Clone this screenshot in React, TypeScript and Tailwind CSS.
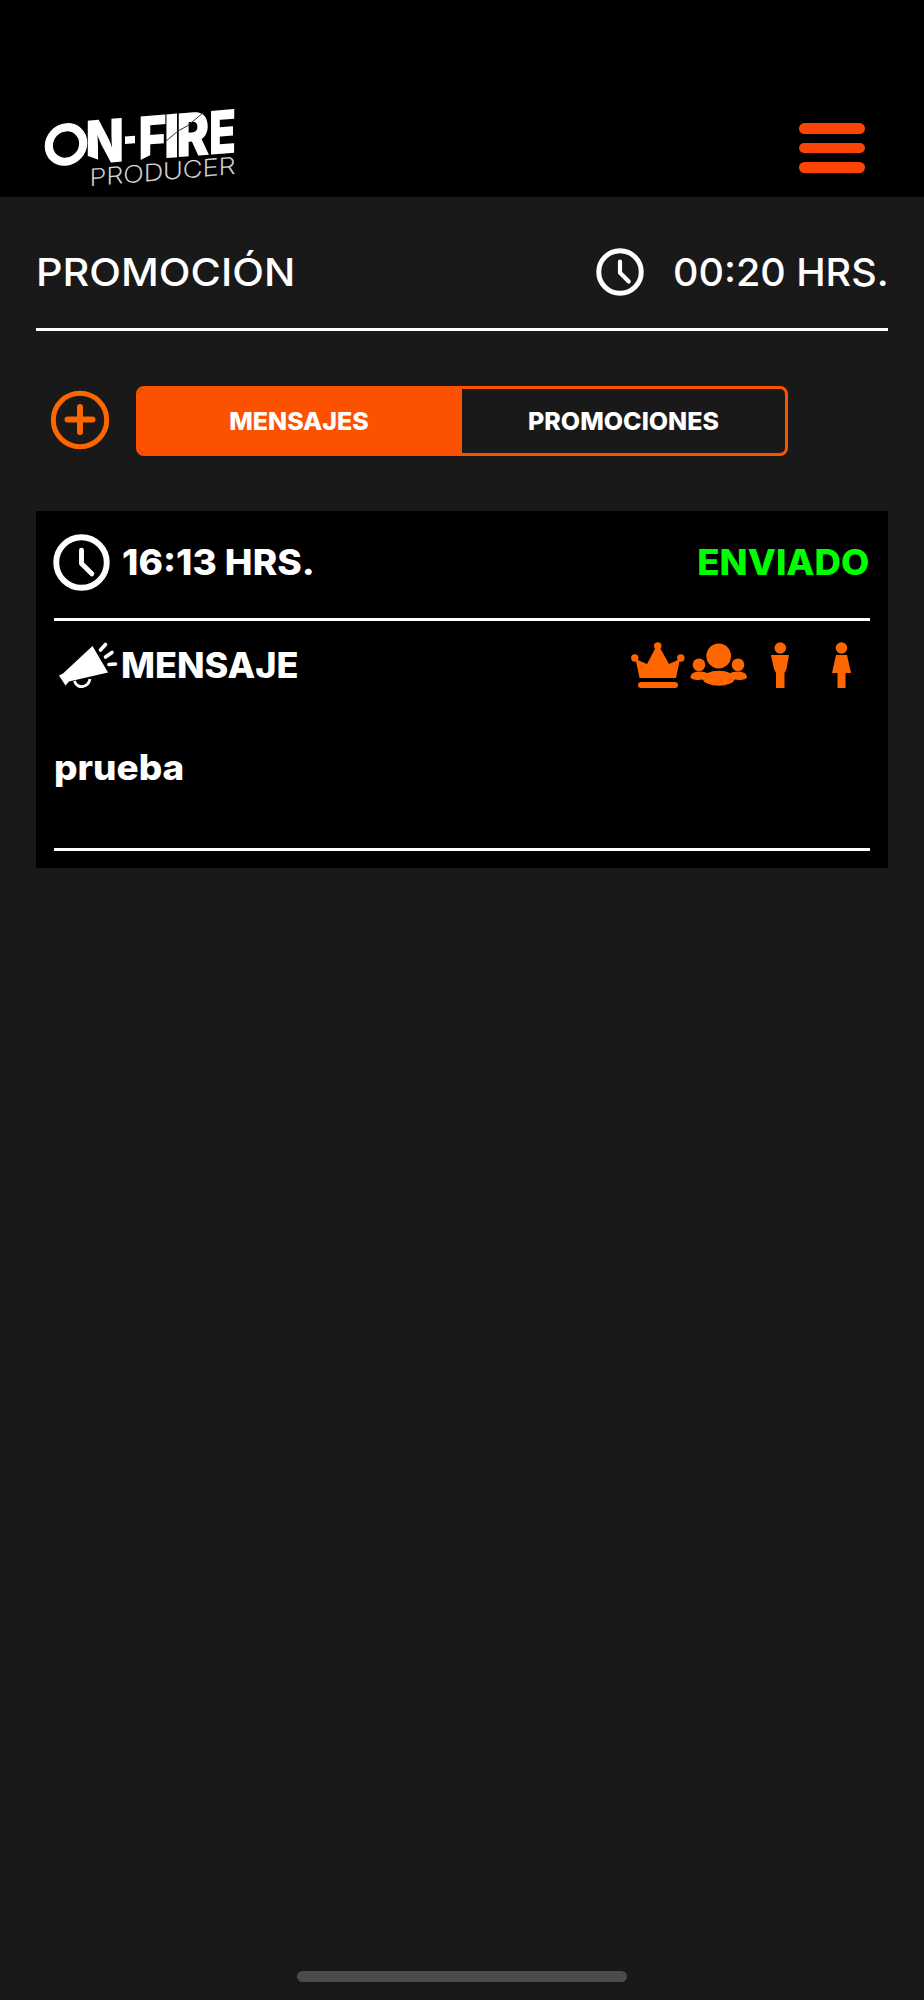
const Logo = () => (
    <svg width="200" height="117" viewBox="40 80 200 117" overflow="visible" fill="#fff" fontFamily="Inter, sans-serif">
        <g transform="skewY(-4.6)" fontWeight="900" fontSize="60">
            <circle cx="66" cy="149.800" r="17.200" fill="none" stroke="#fff" strokeWidth="8.200" />
            <text x="85.500" y="171.500" textLength="38.500" lengthAdjust="spacingAndGlyphs">N</text>
            <path d="M85 163.500L89 163.500L99 168V175H85Z" fill="#000" />
            <rect x="125" y="146.500" width="10" height="7.500" />
            <text x="138.500" y="171.500" textLength="28" lengthAdjust="spacingAndGlyphs">F</text>
            <path d="M140 171.500L151 167V173H140Z" fill="#000" />
            <text x="164" y="171.500" textLength="15.500" lengthAdjust="spacingAndGlyphs">I</text>
            <text x="176.500" y="171.500" textLength="33" lengthAdjust="spacingAndGlyphs">R</text>
            <text x="209" y="171.500" textLength="27" lengthAdjust="spacingAndGlyphs">E</text>
        </g>
        <path d="M165.500 141.500L178 131L188 125.500L204 112" fill="none" stroke="#333" strokeWidth="1" />
        <g transform="skewY(-4.8)" fontWeight="200" fontSize="23.500" fill="#ddd" stroke="#ddd" strokeWidth=".3">
            <text x="89.500" y="193.500" textLength="146" lengthAdjust="spacingAndGlyphs">PRODUCER</text>
        </g>
    </svg>
)

const Clock = ({ className }: { className: string }) => (
    <svg className={className} viewBox="0 0 58 58" fill="none" stroke="#fff" strokeLinecap="round" strokeLinejoin="round">
        <circle cx="29" cy="29" r="25.700" strokeWidth="6" />
        <path d="M29 16.500V30L39.500 40.500" strokeWidth="5" />
    </svg>
)

const Plus = () => (
    <svg className="w-[60px] h-[60px] mb-[3px]" viewBox="0 0 60 60" fill="none" stroke="#ff6600" strokeWidth="5">
        <circle cx="30" cy="30" r="26.700" />
        <path d="M30 17V42M17.500 29.500H42.500" strokeWidth="6" strokeLinecap="round" />
    </svg>
)

const Megaphone = () => (
    <svg className="w-[60px] h-[48px]" viewBox="57 641 60 48" fill="#fff">
        <path d="M58 675.500L62 673.500L91.500 646L107 672.500L68 681.500L64.500 685.500Z" />
        <path d="M73.500 681C76 689 87 688.500 89 679" fill="none" stroke="#fff" strokeWidth="2.800" />
        <path d="M99.500 650L104.500 644.500M104.500 657L111 652.500M108 664.500L114.500 664" stroke="#fff" strokeWidth="3.600" strokeLinecap="round" />
    </svg>
)

const Crown = () => (
    <svg className="w-[54px] h-[46px]" viewBox="631 642 54 46" fill="#ff6600">
        <circle cx="657.700" cy="646" r="3.700" />
        <circle cx="634.800" cy="658" r="3.700" />
        <circle cx="680.800" cy="658" r="3.700" />
        <path d="M635.500 659L647 664L656 647H659.500L669 664L680 659L676 678H639.500Z" />
        <rect x="638" y="682" width="40" height="6" rx="3" />
    </svg>
)

const Group = () => (
    <svg className="w-[57px] h-[46px]" viewBox="690 642 57 46" fill="#ff6600">
        <path d="M690.500 677C690.500 670 706 670.500 708 674L703 679.500C698 680.500 690.500 680 690.500 677Z" />
        <path d="M746.900 677C746.900 670 731.400 670.500 729.400 674L734.400 679.500C739.400 680.500 746.900 680 746.900 677Z" />
        <circle cx="699" cy="664.700" r="6.300" />
        <circle cx="738" cy="664.700" r="6.300" />
        <ellipse cx="718.700" cy="678.200" rx="16" ry="7.500" />
        <circle cx="718.700" cy="656" r="12.400" />
    </svg>
)

const Man = () => (
    <svg className="w-[18px] h-[46px]" viewBox="0 0 18 46" fill="#ff6600">
        <circle cx="9.300" cy="6" r="5.800" />
        <path d="M0 13H18L15.500 27L13.500 31V46H5V31L3 27Z" />
    </svg>
)

const Woman = () => (
    <svg className="w-[19px] h-[46px]" viewBox="0 0 19 46" fill="#ff6600">
        <circle cx="9.500" cy="6" r="5.800" />
        <path d="M4 13H15L19 31H13.500V46H5.500V31H0Z" />
    </svg>
)

const App = () => {
    return (
        <div className="flex flex-col h-[2000px] w-[924px] bg-[#191919] text-white font-['Inter',sans-serif] whitespace-nowrap">
            <header className="flex justify-between h-[197px] bg-black pt-20 pl-10 pr-[59px]">
                <Logo />
                <button className="flex flex-col gap-[9px] pt-[43px] h-min" aria-label="Menú">
                    <span className="w-[66px] h-[10.500px] rounded-full bg-[#fb4405]" />
                    <span className="w-[66px] h-[10.500px] rounded-full bg-[#fb4405]" />
                    <span className="w-[66px] h-[10.500px] rounded-full bg-[#fb4405]" />
                </button>
            </header>

            <main className="grow px-9">
                <div className="flex items-center justify-between h-[133.500px] pt-5 border-b-[3px] border-white">
                    <h1 className="text-[38.500px] font-medium leading-none origin-left scale-x-[1.075]">PROMOCIÓN</h1>
                    <div className="flex items-center">
                        <Clock className="w-12 h-12" />
                        <span className="ml-[29px] w-[215px] text-[38.500px] font-medium leading-none origin-left scale-x-[1.025]">00:20 HRS.</span>
                    </div>
                </div>

                <div className="flex items-center mt-[55.500px] pl-[14px]">
                    <Plus />
                    <div className="flex ml-[26px] w-[652px] h-[70px] rounded-lg border-3 border-[#fc5200] text-[25px] font-extrabold overflow-hidden">
                        <button className="w-1/2 bg-[#fc5200] pt-[2px] pr-[3px]">MENSAJES</button>
                        <button className="w-1/2 pt-[2px]">PROMOCIONES</button>
                    </div>
                </div>

                <section className="mt-[55px] h-[357px] pl-[17.500px] pr-[18.500px] bg-black text-[35px] font-extrabold leading-none">
                    <div className="flex items-center justify-between h-[110px] pb-1 border-b-[3px] border-white">
                        <div className="flex items-center">
                            <Clock className="w-[57px] h-[57px] -ml-px" />
                            <span className="ml-[12px] origin-left scale-x-[1.06]">16:13 HRS.</span>
                        </div>
                        <span className="text-[#00ff00] origin-right scale-x-[1.047]">ENVIADO</span>
                    </div>
                    <div className="flex items-center justify-between pt-5">
                        <div className="flex items-center pl-1">
                            <Megaphone />
                            <span className="ml-[3px] origin-left scale-x-[1.03]">MENSAJE</span>
                        </div>
                        <div className="flex items-center pr-[18.500px]">
                            <Crown />
                            <span className="ml-[5px]"><Group /></span>
                            <span className="ml-6"><Man /></span>
                            <span className="ml-[43px]"><Woman /></span>
                        </div>
                    </div>
                    <div className="mt-[61px] h-[101px] border-b-[3px] border-white">
                        <p className="origin-left scale-x-[1.055]">prueba</p>
                    </div>
                </section>
            </main>

            <div className="self-center w-[330px] h-[11.500px] mb-[18px] rounded-full bg-[#4b4b4b]" />
        </div>
    )
}

export default App
